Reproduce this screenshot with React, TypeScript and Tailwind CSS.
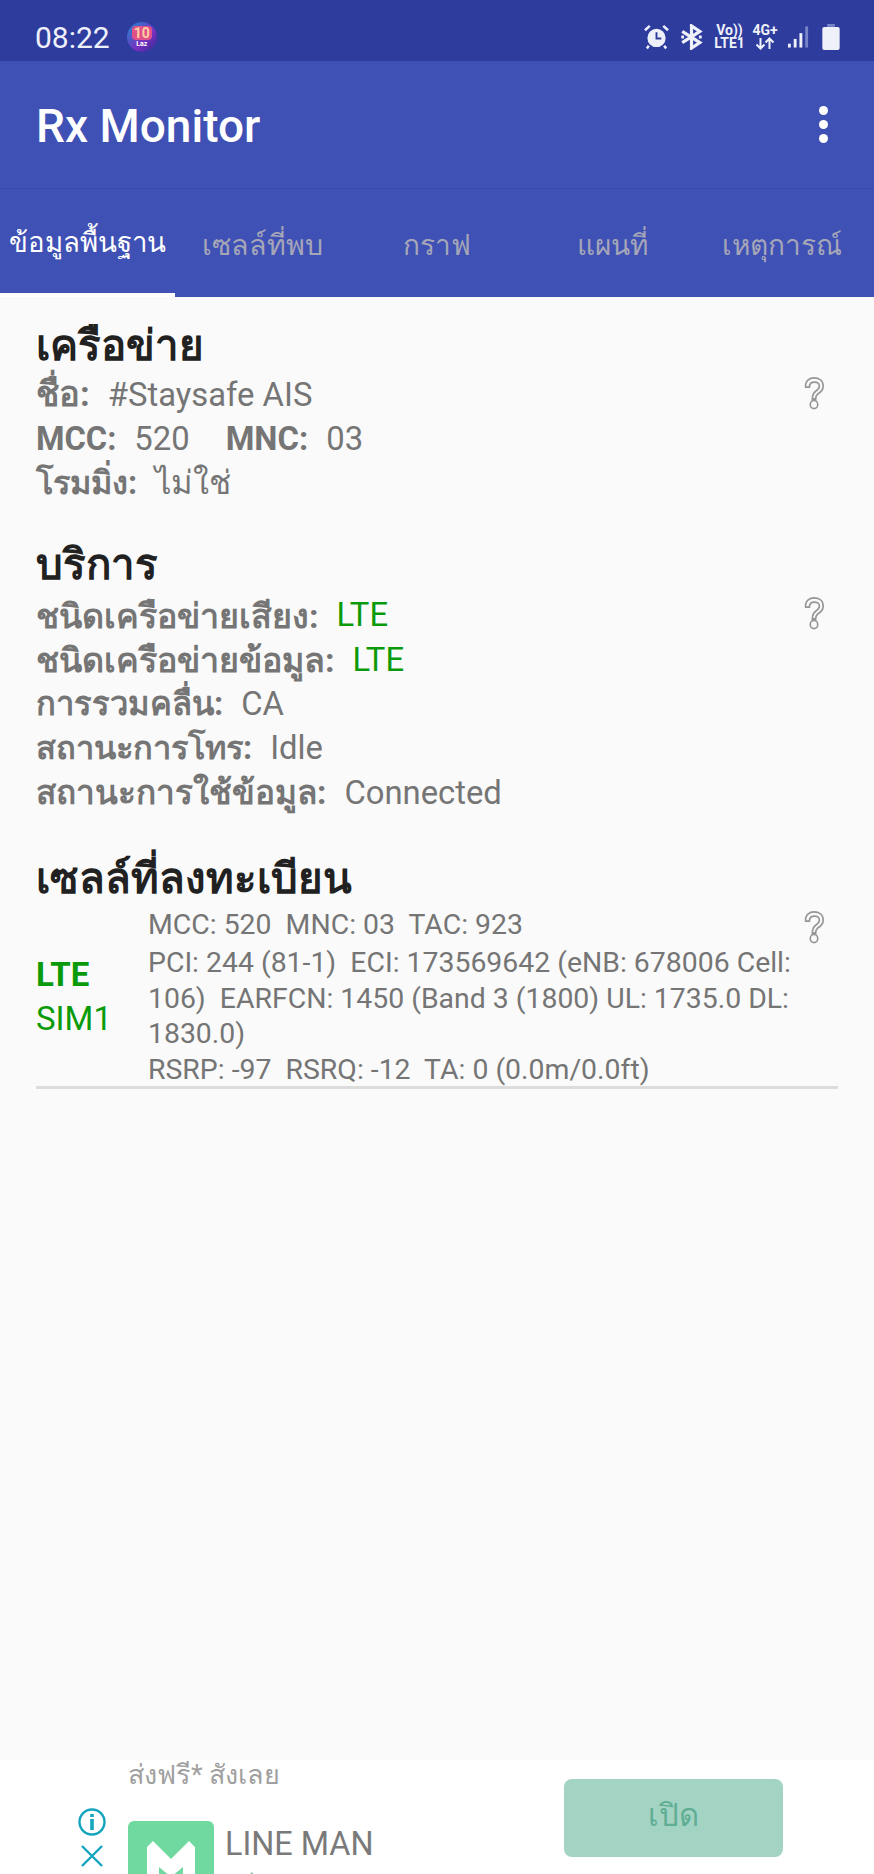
import React from "react";

const font = "font-['Roboto','Noto_Sans','DejaVu_Sans',sans-serif]";

function Help() {
  return (
    <svg width="20" height="33" viewBox="0 0 24 36" fill="none" stroke="#969696" strokeWidth="2" preserveAspectRatio="none" className="shrink-0">
      <path d="M2 11 C1 4 7 1 12 1 C18 1 23 4 23 10 C23 15 19 17 16 19 C14 20.5 14 22 14 24 L10 24 C10 20 10.5 18 14 15.5 C17 13.5 18.5 12 18.5 10 C18.5 7 15.5 5.5 12.5 5.5 C9 5.5 6.5 7.5 6.5 11 Z" />
      <circle cx="12" cy="30" r="4.5" />
    </svg>
  );
}

function Row({ label, value, green, labelClass }: { label: string; value: string; green?: boolean; labelClass: string }) {
  return (
    <div className="h-[44.3px] flex items-center whitespace-pre text-[32.8px] text-[#757575]">
      <span className={`font-bold ${labelClass}`}>{label}</span>
      <span className={green ? "text-[#0a9a0a] ml-[18px]" : "ml-[18px]"}>{value}</span>
    </div>
  );
}

function Heading({ children }: { children: React.ReactNode }) {
  return <div className="h-[54px] flex items-center text-[42px] font-bold text-[#212121]">{children}</div>;
}

function StatusIcons() {
  return (
    <div className="flex items-center text-[#eef0fa]">
      <svg width="25" height="26" viewBox="0 0 26 26" className="mr-[11px]">
        <circle cx="13" cy="14" r="9.5" fill="#eef0fa" />
        <path d="M13 8 V14.5 H18" stroke="#2e3d9e" strokeWidth="2" fill="none" />
        <path d="M1 6 L6 1.5 M25 6 L20 1.5 M5 22 L3 25 M21 22 L23 25" stroke="#eef0fa" strokeWidth="2.6" />
      </svg>
      <svg width="23" height="26" viewBox="0 0 24 28" className="mr-[11px]" fill="none" stroke="#eef0fa" strokeWidth="3.4">
        <path d="M2 8 L21 20 L12 26 V2 L21 8 L2 20" />
        <path d="M1 14 H4 M20 14 H23" strokeWidth="3" />
      </svg>
      <div className="flex flex-col items-center font-['Roboto',sans-serif] font-bold text-[14px] leading-[13px] mr-[7px] w-[31px]">
        <span>Vo))</span>
        <span>LTE1</span>
      </div>
      <div className="flex flex-col items-center font-['Roboto',sans-serif] font-bold text-[14px] leading-[13px] mr-[9px] w-[26px]">
        <span>4G+</span>
        <svg width="20" height="13" viewBox="0 0 20 13" fill="none" stroke="#eef0fa" strokeWidth="2">
          <path d="M5.5 1 V11 M1.5 7.5 L5.5 11.5 L9.5 7.5" />
          <path d="M14.5 12 V2 M10.5 5.5 L14.5 1.5 L18.5 5.5" />
        </svg>
      </div>
      <svg width="23" height="26" viewBox="0 0 24 26" className="mr-[12px]">
        <rect x="1" y="20" width="3" height="4" fill="#eef0fa" />
        <rect x="7" y="15" width="3" height="9" fill="#eef0fa" />
        <rect x="13" y="9" width="3" height="15" fill="#eef0fa" />
        <rect x="19" y="2" width="3" height="22" fill="#7884c8" />
      </svg>
      <svg width="18" height="26" viewBox="0 0 18 27">
        <path d="M5 0 H13 V3 H5 Z" fill="#7884c8" />
        <path d="M2 3 H16 Q18 3 18 5 V25 Q18 27 16 27 H2 Q0 27 0 25 V5 Q0 3 2 3 Z" fill="#eef0fa" />
      </svg>
    </div>
  );
}

export default function App() {
  return (
    <div className={`${font} w-[874px] h-[1874px] overflow-hidden flex flex-col bg-[#fafafa]`}>
      <div className="h-[61px] bg-[#2e3c9e] flex items-center justify-between pl-[35px] pr-[34px] pt-[13px] shrink-0 text-[#eef0fa]">
        <div className="flex items-center">
          <span className="text-[30px] font-['Roboto',sans-serif]">08:22</span>
          <div className="ml-[17px] w-[30px] h-[30px] rounded-full bg-[linear-gradient(135deg,#1b8bd0,#7a2fc0_60%,#2a2a90)] flex flex-col items-center justify-center">
            <span className="text-[14px] leading-[14px] font-bold text-[#ffd0a0] rounded-[4px] bg-[#e0508a] px-[2px]">10</span>
            <span className="text-[7px] leading-[8px] font-bold text-white">Laz</span>
          </div>
        </div>
        <StatusIcons />
      </div>

      <div className="h-[128px] bg-[#3f51b5] border-b border-[#3a4aa8] flex items-center justify-between pl-[36px] pr-[46px] shrink-0">
        <span className="text-[46px] font-medium text-white font-['Roboto',sans-serif] pt-[3px]">Rx Monitor</span>
        <div className="flex flex-col gap-[5px]">
          <span className="w-[9px] h-[9px] rounded-full bg-white" />
          <span className="w-[9px] h-[9px] rounded-full bg-white" />
          <span className="w-[9px] h-[9px] rounded-full bg-white" />
        </div>
      </div>

      <div className="h-[108px] bg-[#3f51b5] flex shrink-0 text-[28px] text-[#a5a6b8]">
        <div className="w-[175px] border-b-[4px] border-white text-white flex items-center justify-center pt-[3px] text-[27.6px]">ข้อมูลพื้นฐาน</div>
        <div className="w-[175px] flex items-center justify-center pt-[5px] pr-[1px] text-[28.6px]"><span>เซลล์ที่พบ</span></div>
        <div className="w-[175px] flex items-center justify-center pt-[5px] pr-[2px]"><span>กราฟ</span></div>
        <div className="w-[175px] flex items-center justify-center pt-[5px] pr-[1px]"><span>แผนที่</span></div>
        <div className="w-[174px] flex items-center justify-center pt-[5px] pr-[10px]"><span>เหตุการณ์</span></div>
      </div>

      <div className="flex-1 min-h-0 pt-[21px] px-[36px]">
        <Heading>เครือข่าย</Heading>
        <div className="flex justify-between pr-[14px] mt-[1px]">
          <div>
            <Row label="ชื่อ:" value="#Staysafe AIS" labelClass="text-[34.6px]" />
            <div className="h-[44.3px] flex items-center whitespace-pre text-[32.8px] text-[#757575]">
              <span className="font-bold text-[32.6px]">MCC:</span>
              <span className="ml-[18px]">520</span>
              <span className="font-bold ml-[36px]">MNC:</span>
              <span className="ml-[18px]">03</span>
            </div>
            <Row label="โรมมิ่ง:" value="ไม่ใช่" labelClass="text-[32.5px]" />
          </div>
          <div className="pt-[4px]"><Help /></div>
        </div>

        <div className="mt-[32px]"><Heading>บริการ</Heading></div>
        <div className="flex justify-between pr-[14px] mt-[2px]">
          <div>
            <Row label="ชนิดเครือข่ายเสียง:" value="LTE" green labelClass="text-[34px]" />
            <Row label="ชนิดเครือข่ายข้อมูล:" value="LTE" green labelClass="text-[34px]" />
            <Row label="การรวมคลื่น:" value="CA" labelClass="text-[32.7px]" />
            <Row label="สถานะการโทร:" value="Idle" labelClass="text-[32.6px]" />
            <Row label="สถานะการใช้ข้อมูล:" value="Connected" labelClass="text-[33.3px]" />
          </div>
          <div className="pt-[3px]"><Help /></div>
        </div>

        <div className="mt-[36px]"><Heading>เซลล์ที่ลงทะเบียน</Heading></div>
        <div className="flex justify-between border-b-[3px] border-[#dcdcdc] h-[184px] pt-[2px]">
          <div className="flex">
            <div className="w-[112px] shrink-0 flex flex-col justify-center text-[#0a9a0a] text-[33px] leading-[44px] pt-[1px]">
              <span className="font-bold">LTE</span>
              <span>SIM1</span>
            </div>
            <div className="w-[650px] text-[28.4px] text-[#757575] whitespace-pre-wrap leading-[35.5px]">
              <div className="h-[36px] leading-[36px]">MCC: 520  MNC: 03  TAC: 923</div>
              <div className="mt-[2px]">PCI: 244 (81-1)  ECI: 173569642 (eNB: 678006 Cell: 106)  EARFCN: 1450 (Band 3 (1800) UL: 1735.0 DL: 1830.0)</div>
              <div>RSRP: -97  RSRQ: -12  TA: 0 (0.0m/0.0ft)</div>
            </div>
          </div>
          <div className="pr-[14px] pt-[4px]"><Help /></div>
        </div>
      </div>

      <div className="h-[114px] shrink-0 bg-white overflow-hidden flex pl-[77px]">
        <div className="w-[30px] flex flex-col items-center pt-[47px] mr-[21px] text-[#12a5bd]">
          <svg width="30" height="30" viewBox="0 0 30 30" fill="none" stroke="#12a5bd" strokeWidth="2.4">
            <circle cx="15" cy="15" r="12.5" />
            <path d="M15 12 V23" strokeWidth="3.6" />
            <path d="M15 7 V10" strokeWidth="3.6" />
          </svg>
          <svg width="24" height="24" viewBox="0 0 24 24" className="mt-[7px]" fill="none" stroke="#12a5bd" strokeWidth="2.4">
            <path d="M2 2 L22 22 M22 2 L2 22" />
          </svg>
        </div>
        <div className="w-[436px] shrink-0">
          <div className="h-[32px] text-[27px] leading-[30px] text-[#a0a0a0]">ส่งฟรี* สังเลย</div>
          <div className="flex mt-[29px]">
            <div className="w-[86px] h-[86px] shrink-0 rounded-[6px] bg-[#6fd9a0] flex justify-center pt-[20px]">
              <svg width="48" height="60" viewBox="0 0 48 60" fill="#ffffff">
                <path d="M0 6 L6 0 L24 18 L42 0 L48 6 V60 H36 V26 L24 36 L12 26 V60 H0 Z" />
              </svg>
            </div>
            <div className="ml-[11px] flex flex-col">
              <span className="text-[32.4px] leading-[44px] text-[#7a7a7a] pt-[1px]">LINE MAN</span>
              <span className="text-[26px] leading-[34px] text-[#7fc0a6] ml-[14px] mt-[7px]">สั่งอาหารถึงบ้าน</span>
            </div>
          </div>
        </div>
        <div className="w-[219px] h-[78px] mt-[19px] shrink-0 rounded-[8px] bg-[#a3d3c3] flex items-center justify-center text-[31px] text-[#5fae94] pb-[4px]">เปิด</div>
      </div>
    </div>
  );
}
